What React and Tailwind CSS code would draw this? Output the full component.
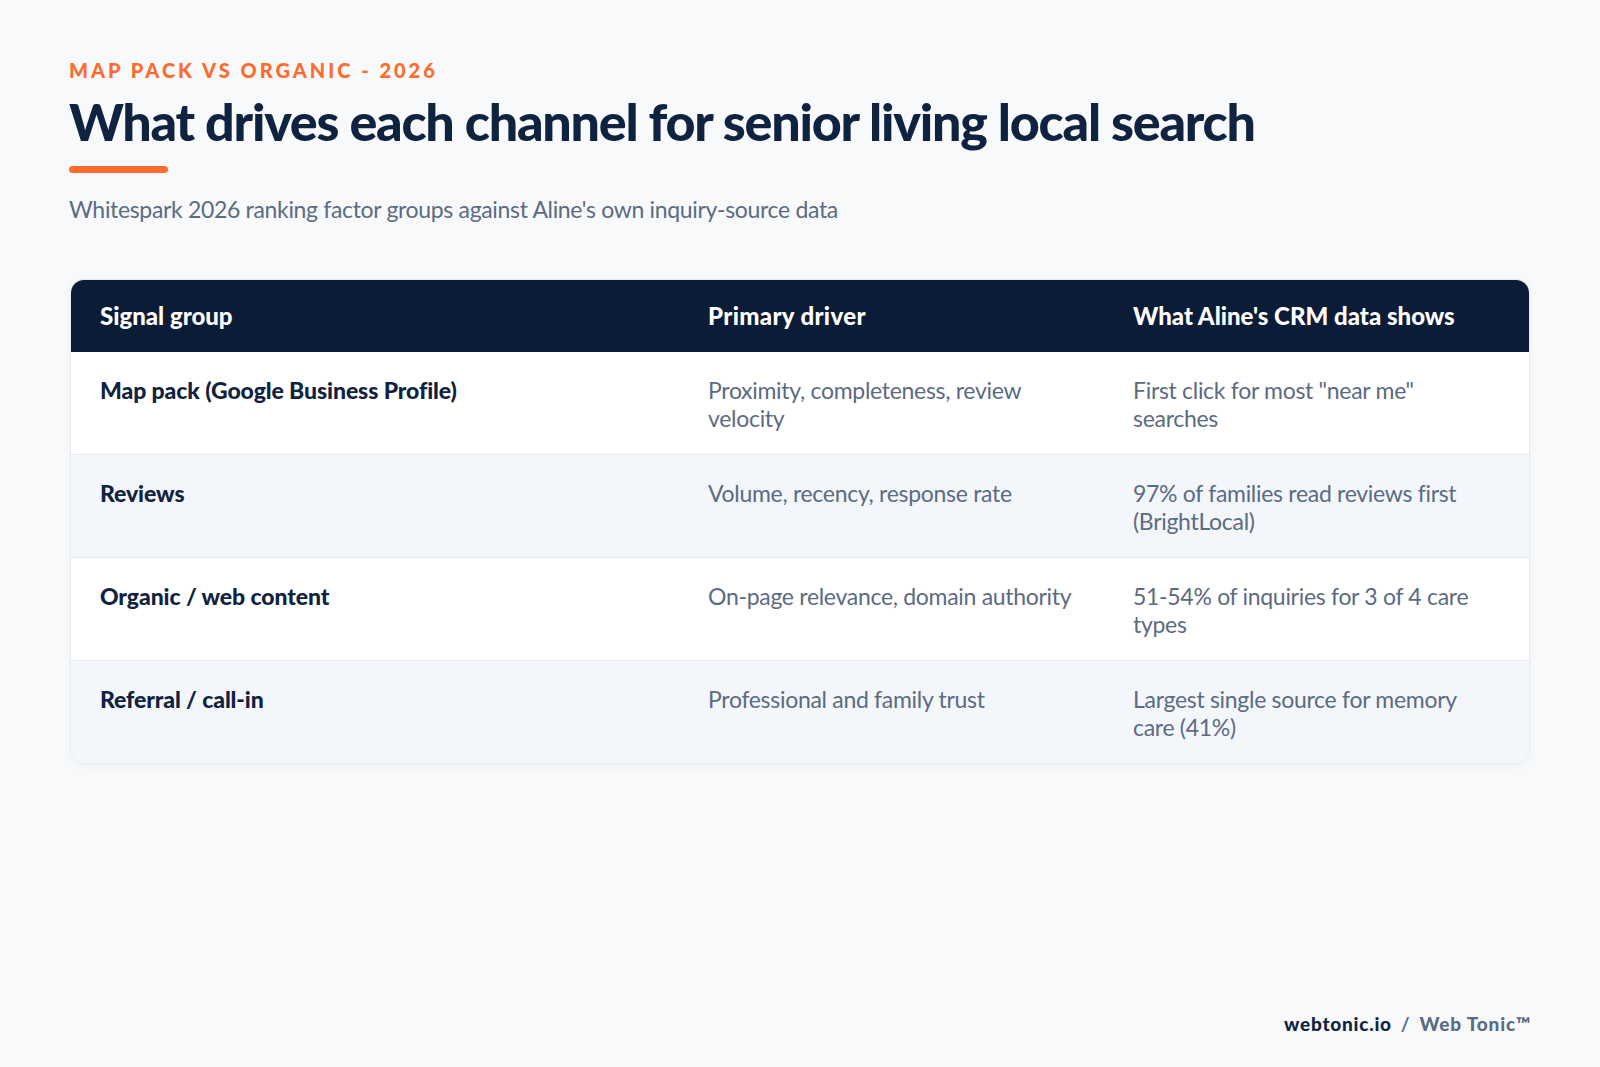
const rows = [
  ["Map pack (Google Business Profile)", "Proximity, completeness, review velocity", "First click for most \"near me\" searches"],
  ["Reviews", "Volume, recency, response rate", "97% of families read reviews first (BrightLocal)"],
  ["Organic / web content", "On-page relevance, domain authority", "51-54% of inquiries for 3 of 4 care types"],
  ["Referral / call-in", "Professional and family trust", "Largest single source for memory care (41%)"],
];

export default function App() {
  return (
    <div className="relative h-[1067px] w-[1600px] bg-[#f7f9fb] pl-[69px] pr-[70px] pt-[55px] font-['Lato','Liberation_Sans',sans-serif]">
      <div className="text-[20px] font-black uppercase leading-[30px] tracking-[0.15em] text-[#ff6b2c]">Map Pack vs Organic - 2026</div>
      <h1 className="mt-[5px] text-[52px] font-black leading-[62px] tracking-[-1.23px] text-[#0f2340]">What drives each channel for senior living local search</h1>
      <div className="mt-[14px] h-[7px] w-[99px] rounded-full bg-[#ff6b2c]"></div>
      <p className="mt-[19px] text-[23px] leading-[34px] tracking-[-0.33px] text-[#5b6b82]">Whitespark 2026 ranking factor groups against Aline's own inquiry-source data</p>
      <div className="ml-[1px] mt-[53px] w-[1460px] overflow-hidden rounded-[14px] border border-[#e7ebf0] bg-white shadow-[0_2px_8px_rgba(15,35,64,0.04)]">
        <div className="grid h-[72px] grid-cols-[608px_425px_1fr] items-center bg-[#0c1c36] px-[29px] text-[24px] font-black text-white">
          <div>Signal group</div>
          <div className="tracking-[0.35px]">Primary driver</div>
          <div>What Aline's CRM data shows</div>
        </div>
        {rows.map((r, i) => (
          <div key={r[0]} className={`grid h-[103px] grid-cols-[608px_425px_1fr] border-b border-[#e7ebf0] px-[29px] pt-[24px] text-[23px] leading-[28px] tracking-[-0.3px] last:h-[102px] last:border-b-0 ${i % 2 ? "bg-[#f3f6fa]" : "bg-white"}`}>
            <div className="font-black tracking-[-0.1px] text-[#0f2340]">{r[0]}</div>
            <div className="pr-[40px] text-[#5b6b82]">{r[1]}</div>
            <div className="pr-[10px] text-[#5b6b82]">{r[2]}</div>
          </div>
        ))}
      </div>
      <div className="absolute right-[69px] top-[1010px] flex text-[19px] font-black tracking-[0.75px] text-[#0f2340]">
        <span>webtonic.io</span>
        <span className="ml-[9px] font-bold text-[#5b6b82]">/</span>
        <span className="ml-[9px] tracking-[0.85px] text-[#5b6b82]">Web Tonic™</span>
      </div>
    </div>
  );
}
